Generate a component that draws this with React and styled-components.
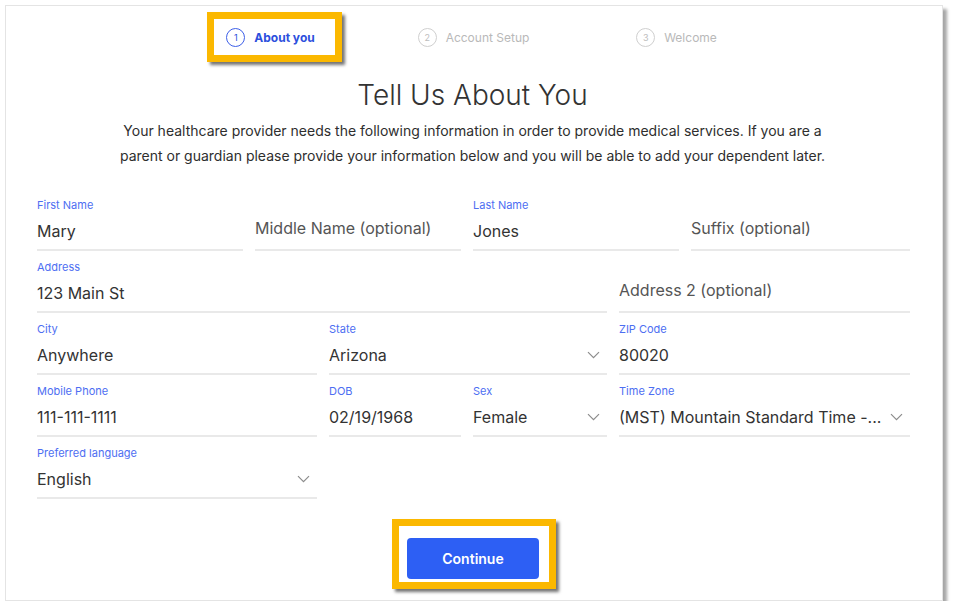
import styled, { createGlobalStyle } from "styled-components";

const GlobalStyle = createGlobalStyle`
  html, body {
    margin: 0;
    padding: 0;
    background: #ffffff;
  }
  body {
    font-family: Inter, "Noto Sans", sans-serif;
  }
`;

const Page = styled.div`
  padding: 5px 0 0 5px;
`;

const Card = styled.div`
  width: 938px;
  height: 596px;
  border: 1px solid #e4e4e4;
  background: #fff;
  box-shadow: 4px 4px 3px rgba(0, 0, 0, 0.35);
  padding: 6px 34px 0 31px;
  box-sizing: border-box;
  display: flex;
  flex-direction: column;
`;

const Stepper = styled.div`
  display: grid;
  grid-template-columns: repeat(3, 203px);
  justify-content: center;
  justify-items: center;
  align-items: center;
  height: 50px;
  padding-left: 2px;
`;

const Highlight = styled.div`
  border: 7px solid #fbb800;
  background: #fff;
  box-shadow: 3px 3px 3px rgba(0, 0, 0, 0.55);
  display: flex;
  align-items: center;
  padding: ${(p) => p.pad};
  margin-left: ${(p) => p.shift || "0"};
`;

const Step = styled.div`
  display: flex;
  align-items: center;
  gap: 9px;
  height: 36px;
  color: ${(p) => (p.active ? "#2c4fdd" : "#b9b9b9")};
  font-size: 12px;
  font-weight: ${(p) => (p.active ? 700 : 400)};
`;

const StepNum = styled.span`
  width: 17px;
  height: 17px;
  border-radius: 50%;
  border: 1.5px solid ${(p) => (p.active ? "#3d5fe8" : "#cfcfcf")};
  display: flex;
  align-items: center;
  justify-content: center;
  font-size: 9px;
  font-weight: 400;
  color: ${(p) => (p.active ? "#2c4fdd" : "#bdbdbd")};
`;

const Title = styled.h1`
  margin: 16px 0 0;
  font-size: 28px;
  line-height: 34px;
  font-weight: 300;
  color: #333;
  text-align: center;
`;

const Intro = styled.p`
  margin: 6px auto 0;
  width: 730px;
  font-family: Inter, "Noto Sans", sans-serif;
  font-size: 14px;
  line-height: 25px;
  color: #2e2e2e;
  text-align: center;
`;

const Form = styled.div`
  margin-top: 30px;
  display: grid;
  grid-template-columns: 206px 62px 132px 134px 60px 219px;
  column-gap: 12px;
  row-gap: 9px;
`;

const Field = styled.div`
  grid-column: ${(p) => p.col};
  display: flex;
  flex-direction: column;
  min-width: 0;
`;

const Label = styled.div`
  height: 14px;
  line-height: 14px;
  font-size: 11px;
  color: #4d6ef2;
`;

const InputBox = styled.div`
  height: 37px;
  display: flex;
  align-items: center;
  gap: 5px;
  border-bottom: 2px solid #e9e9e9;
  padding-right: ${(p) => (p.select ? "7px" : "0")};
`;

const Value = styled.span`
  flex: 1;
  min-width: 0;
  font-size: 16px;
  color: ${(p) => (p.placeholder ? "#555" : "#333")};
  white-space: nowrap;
  overflow: hidden;
  text-overflow: ellipsis;
  margin-top: ${(p) => (p.placeholder ? "-6px" : "0")};
`;

const Footer = styled.div`
  margin-top: 20px;
  display: flex;
  justify-content: center;
  padding-left: 3px;
`;

const Button = styled.button`
  width: 132px;
  height: 41px;
  border: none;
  border-radius: 4px;
  background: #2d5ff4;
  color: #fff;
  font-family: Inter, "Noto Sans", sans-serif;
  font-size: 14px;
  font-weight: 600;
  cursor: pointer;
`;

const Chevron = () => (
  <svg width="13" height="8" viewBox="0 0 13 8" fill="none">
    <path d="M1 1.2l5.5 5.5 5.5-5.5" stroke="#8c8c8c" strokeWidth="1.2" />
  </svg>
);

const fields = [
  { col: "1 / span 1", label: "First Name", value: "Mary" },
  { col: "2 / span 2", placeholder: "Middle Name (optional)" },
  { col: "4 / span 2", label: "Last Name", value: "Jones" },
  { col: "6 / span 1", placeholder: "Suffix (optional)" },
  { col: "1 / span 4", label: "Address", value: "123 Main St" },
  { col: "5 / span 2", placeholder: "Address 2 (optional)" },
  { col: "1 / span 2", label: "City", value: "Anywhere" },
  { col: "3 / span 2", label: "State", value: "Arizona", select: true },
  { col: "5 / span 2", label: "ZIP Code", value: "80020" },
  { col: "1 / span 2", label: "Mobile Phone", value: "111-111-1111" },
  { col: "3 / span 1", label: "DOB", value: "02/19/1968" },
  { col: "4 / span 1", label: "Sex", value: "Female", select: true },
  { col: "5 / span 2", label: "Time Zone", value: "(MST) Mountain Standard Time -...", select: true },
  { col: "1 / span 2", label: "Preferred language", value: "English", select: true },
];

const steps = [
  { n: 1, text: "About you", active: true },
  { n: 2, text: "Account Setup" },
  { n: 3, text: "Welcome" },
];

export default function App() {
  return (
    <Page>
      <GlobalStyle />
      <Card>
        <Stepper>
          {steps.map((s) => {
            const step = (
              <Step active={s.active} key={s.n}>
                <StepNum active={s.active}>{s.n}</StepNum>
                {s.text}
              </Step>
            );
            return s.active ? (
              <Highlight key={s.n} pad="0 20px 0 12px" shift="8px">
                {step}
              </Highlight>
            ) : (
              step
            );
          })}
        </Stepper>

        <Title>Tell Us About You</Title>
        <Intro>
          Your healthcare provider needs the following information in order to provide medical services. If you are a
          parent or guardian please provide your information below and you will be able to add your dependent later.
        </Intro>

        <Form>
          {fields.map((f, i) => (
            <Field col={f.col} key={i}>
              <Label>{f.label}</Label>
              <InputBox select={f.select}>
                <Value placeholder={f.placeholder ? 1 : 0}>{f.value || f.placeholder}</Value>
                {f.select && <Chevron />}
              </InputBox>
            </Field>
          ))}
        </Form>

        <Footer>
          <Highlight pad="12px 10px 3px 8px">
            <Button>Continue</Button>
          </Highlight>
        </Footer>
      </Card>
    </Page>
  );
}
